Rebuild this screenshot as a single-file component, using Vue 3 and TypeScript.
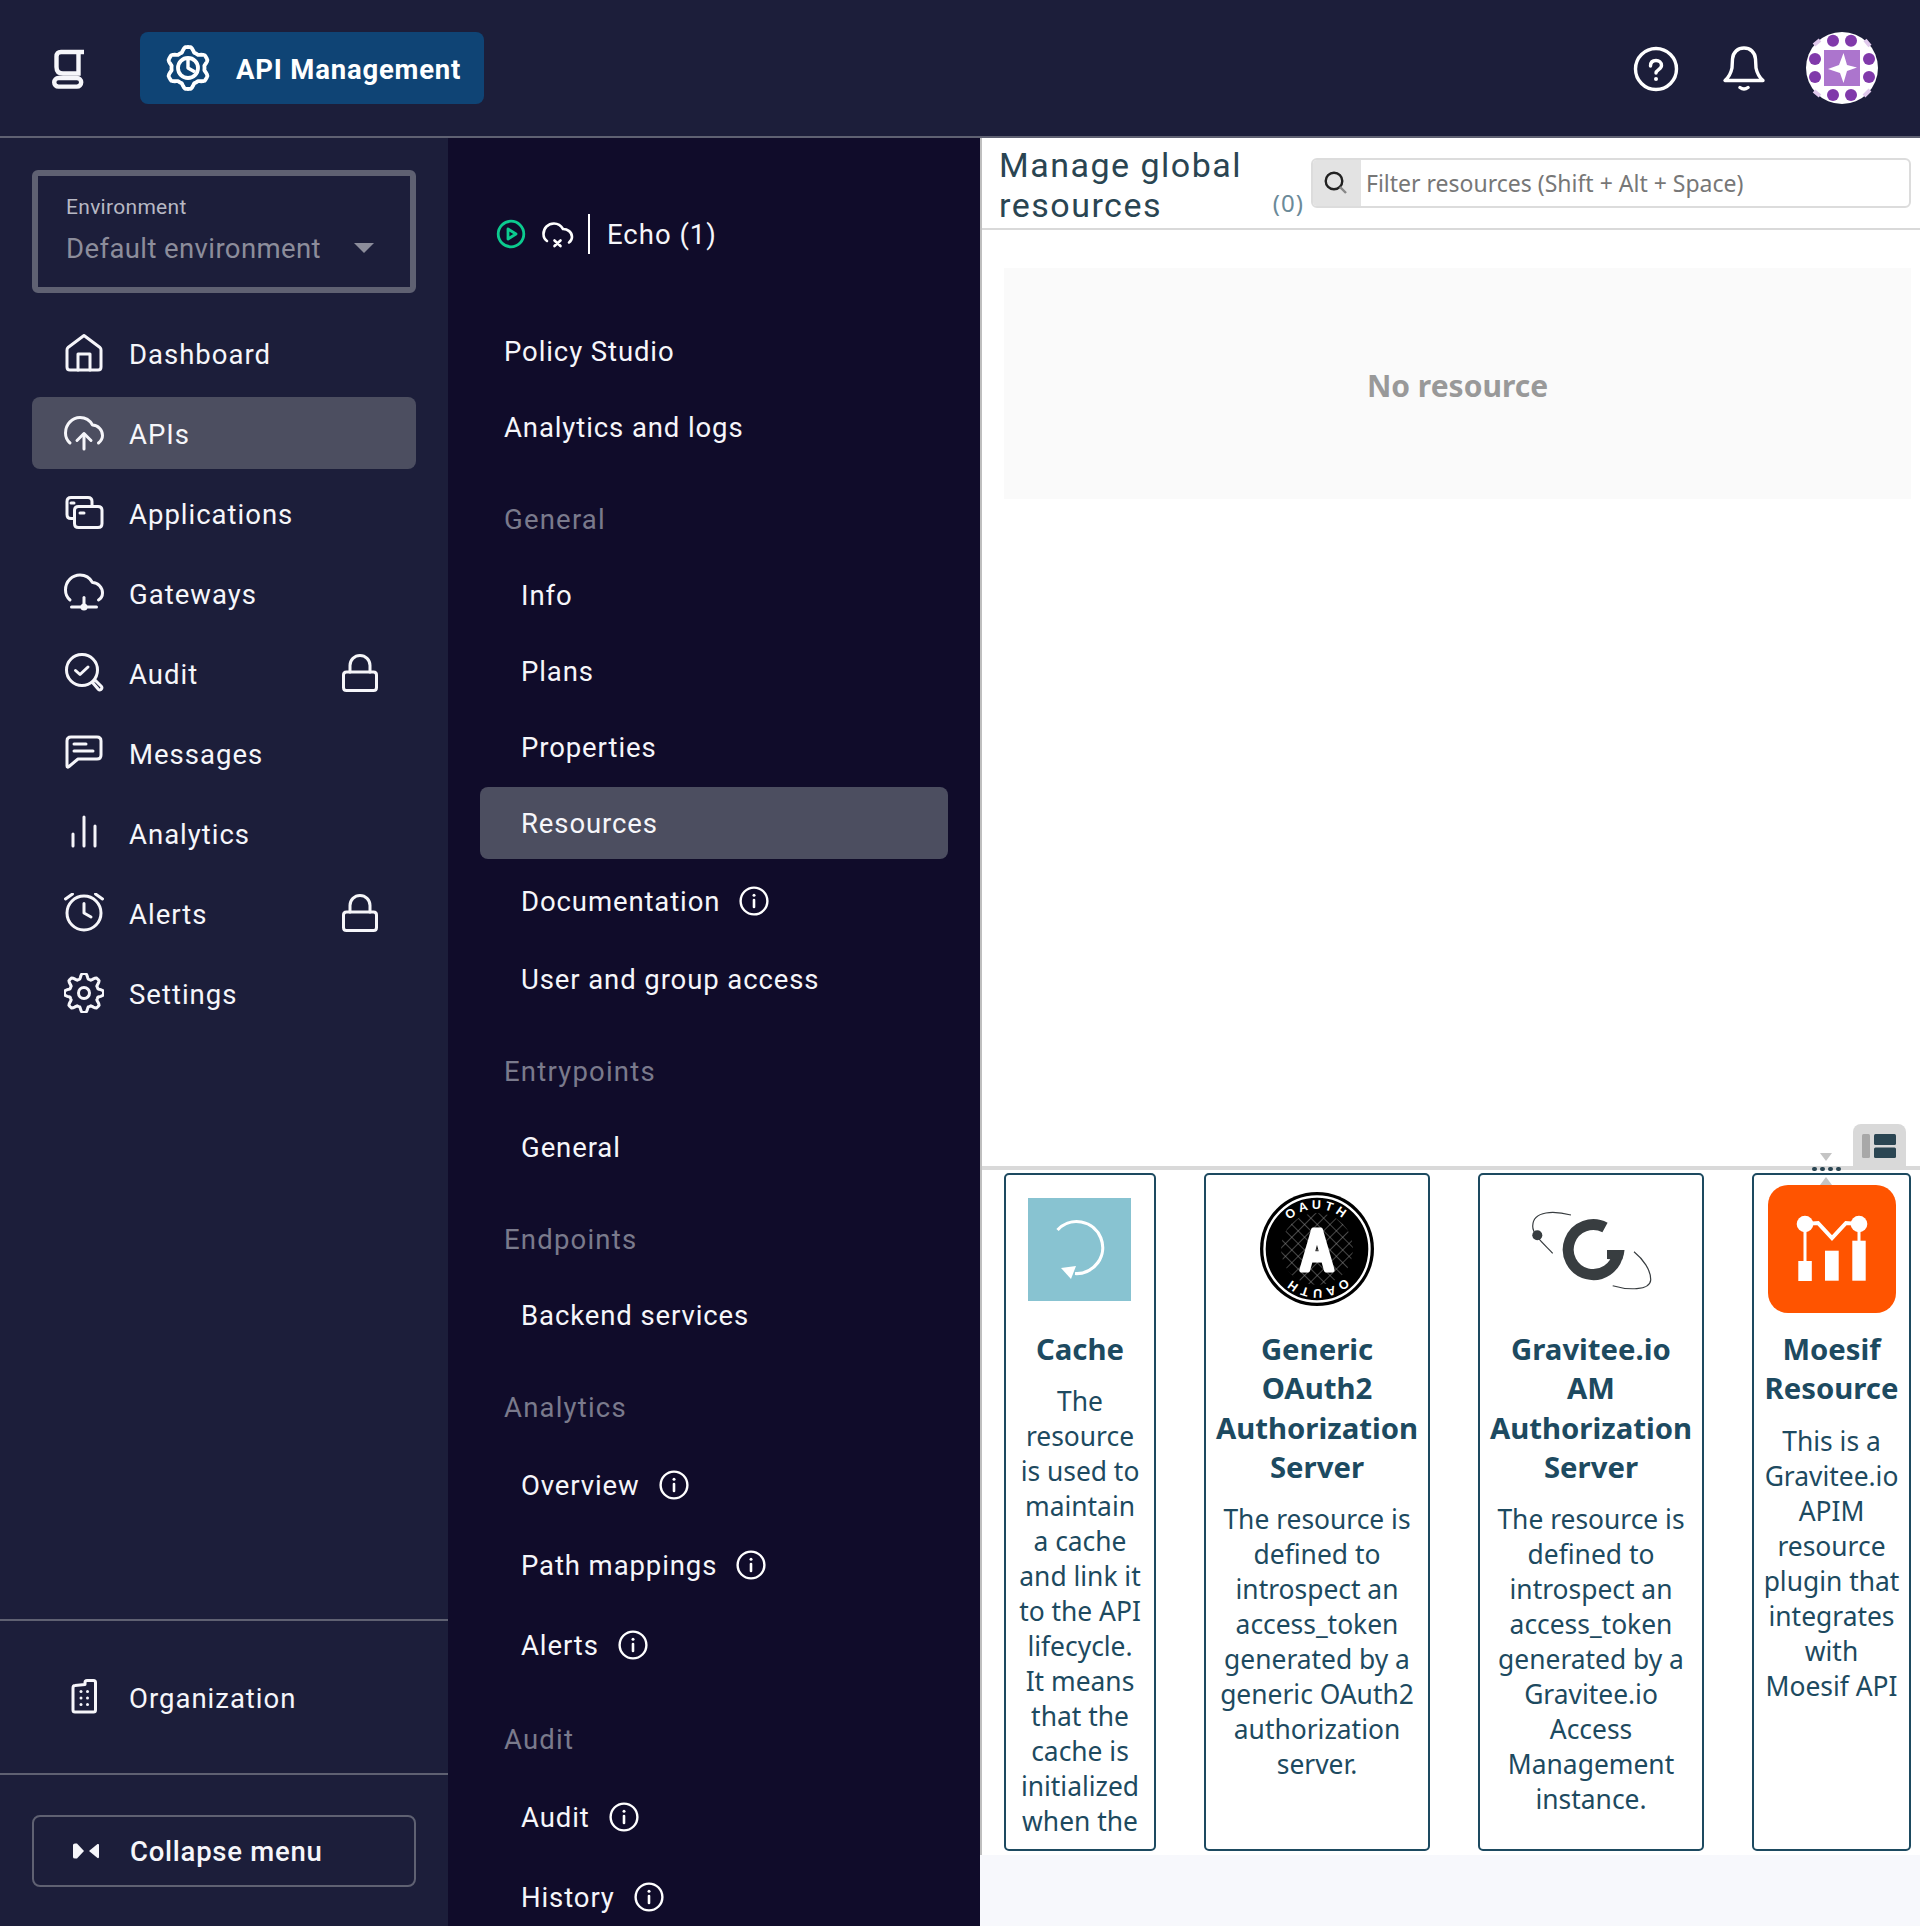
<script setup lang="ts">
function lobed(cx: number, cy: number, R: number, r: number, n: number, phase = 0): string {
  const pts: string[] = []
  const steps = n * 16
  for (let i = 0; i < steps; i++) {
    const t = (i / steps) * Math.PI * 2
    const c = Math.max(-1, Math.min(1, 1.5 * Math.cos(n * (t - phase))))
    const rad = (R + r) / 2 + ((R - r) / 2) * c
    const x = cx + rad * Math.sin(t)
    const y = cy - rad * Math.cos(t)
    pts.push(`${i === 0 ? 'M' : 'L'}${x.toFixed(2)} ${y.toFixed(2)}`)
  }
  return pts.join(' ') + ' Z'
}

const cloud = 'M6 30 C2.5 27 1.5 23 1.5 20 C1.5 11 8.5 4.5 16 4.5 C22 4.5 26 7.5 28.5 12 C34 12 38.5 17 38.5 22.5 C38.5 25.5 37 28 34.5 30'

const icons: Record<string, string[]> = {
  home: ['M20 2.5 L36 14.5 Q37 15.5 37 17 V34 Q37 37 34 37 H6 Q3 37 3 34 V17 Q3 15.5 4 14.5 Z', 'M14 37 V21 H26 V37'],
  upload: [cloud, 'M20 36 V21', 'M13 27.5 L20 20.5 L27 27.5'],
  apps: ['M9 25.5 H7 Q3 25.5 3 21.5 V8.5 Q3 4.5 7 4.5 H24 Q28 4.5 28 8.5 V13', 'M14.5 13.5 H34 Q38 13.5 38 17.5 V30.5 Q38 34.5 34 34.5 H14.5 Q10.5 34.5 10.5 30.5 V17.5 Q10.5 13.5 14.5 13.5 Z', 'M7 10 H10', 'M16 20 H20'],
  gateway: ['M6 27 C2.5 24 1.5 20 1.5 17 C1.5 8 8.5 2 16 2 C22 2 26 5 28.5 9.5 C34 9.5 38.5 14.5 38.5 20 C38.5 23 37 25.5 34.5 27', 'M7.5 34 H32.5', 'M20 24.5 V32', 'M18 34 a2 2 0 1 0 4 0 a2 2 0 1 0 -4 0'],
  audit: ['M33.5 17 A15.5 15.5 0 1 1 2.5 17 A15.5 15.5 0 1 1 33.5 17 Z', 'M11.5 17.5 L16 21.5 L24 14', 'M28.5 29.5 L31 27 L37.5 33.5 Q38.5 35 37 36.5 Q35.5 37.5 34.5 36.5 Z'],
  msg: ['M7 4 H33 Q37 4 37 8 V22 Q37 26 33 26 H14 L5 33.5 Q3 35 3 33 V8 Q3 4 7 4 Z', 'M10 11 H22', 'M10 18 H29'],
  chart: ['M9 21 V33', 'M20 4 V33', 'M31 13 V33'],
  clock: ['M37 20 A17 17 0 1 1 3 20 A17 17 0 1 1 37 20 Z', 'M20 10.5 V20 L27 24', 'M1.5 6 L8.5 1', 'M38.5 6 L31.5 1'],
  gear: [lobed(20, 20, 19.5, 14.5, 8), 'M25.5 20 A5.5 5.5 0 1 1 14.5 20 A5.5 5.5 0 1 1 25.5 20 Z'],
  lock: ['M6.5 18 H33.5 Q36.5 18 36.5 21 V33.5 Q36.5 36.5 33.5 36.5 H6.5 Q3.5 36.5 3.5 33.5 V21 Q3.5 18 6.5 18 Z', 'M10 18 V11.5 A10 10 0 0 1 30 11.5 V18'],
  org: ['M9 11 Q9 8.5 11 8.5 L21 7.5 V5.5 Q21 3.5 23 3.5 H29.5 Q31.5 3.5 31.5 5.5 V33 Q31.5 35 29.5 35 H11 Q9 35 9 33 Z', 'M17 14.5 h0.01', 'M23.5 14.5 h0.01', 'M17 21 h0.01', 'M23.5 21 h0.01', 'M17 27.5 h0.01', 'M23.5 27.5 h0.01'],
}

interface MainItem { label: string; icon: string; active?: boolean; locked?: boolean }
const mainNav: MainItem[] = [
  { label: 'Dashboard', icon: 'home' },
  { label: 'APIs', icon: 'upload', active: true },
  { label: 'Applications', icon: 'apps' },
  { label: 'Gateways', icon: 'gateway' },
  { label: 'Audit', icon: 'audit', locked: true },
  { label: 'Messages', icon: 'msg' },
  { label: 'Analytics', icon: 'chart' },
  { label: 'Alerts', icon: 'clock', locked: true },
  { label: 'Settings', icon: 'gear' },
]

interface SubItem { label: string; info?: boolean; active?: boolean }
interface SubGroup { title?: string; items: SubItem[] }
const subNav: SubGroup[] = [
  { items: [{ label: 'Policy Studio' }, { label: 'Analytics and logs' }] },
  { title: 'General', items: [
    { label: 'Info' }, { label: 'Plans' }, { label: 'Properties' },
    { label: 'Resources', active: true }, { label: 'Documentation', info: true }, { label: 'User and group access' },
  ] },
  { title: 'Entrypoints', items: [{ label: 'General' }] },
  { title: 'Endpoints', items: [{ label: 'Backend services' }] },
  { title: 'Analytics', items: [
    { label: 'Overview', info: true }, { label: 'Path mappings', info: true }, { label: 'Alerts', info: true },
  ] },
  { title: 'Audit', items: [{ label: 'Audit', info: true }, { label: 'History', info: true }] },
]

interface Card { kind: string; width: number; title: string[]; text: string[] }
const cards: Card[] = [
  { kind: 'cache', width: 152, title: ['Cache'], text: ['The', 'resource', 'is used to', 'maintain', 'a cache', 'and link it', 'to the API', 'lifecycle.', 'It means', 'that the', 'cache is', 'initialized', 'when the'] },
  { kind: 'oauth', width: 226, title: ['Generic', 'OAuth2', 'Authorization', 'Server'], text: ['The resource is', 'defined to', 'introspect an', 'access_token', 'generated by a', 'generic OAuth2', 'authorization', 'server.'] },
  { kind: 'gravitee', width: 226, title: ['Gravitee.io', 'AM', 'Authorization', 'Server'], text: ['The resource is', 'defined to', 'introspect an', 'access_token', 'generated by a', 'Gravitee.io', 'Access', 'Management', 'instance.'] },
  { kind: 'moesif', width: 159, title: ['Moesif', 'Resource'], text: ['This is a', 'Gravitee.io', 'APIM', 'resource', 'plugin that', 'integrates', 'with', 'Moesif API'] },
]

const avatarDots = [[27, 8.7], [45, 8.7], [9, 27], [63, 27], [9, 45], [63, 45], [27, 63], [45, 63]]
const apimGear = lobed(24, 24, 21, 16.5, 6)
</script>

<template>
  <div class="page">
    <header class="topbar">
      <svg class="logo" viewBox="0 0 32 40" width="32" height="40" fill="none" stroke="#f6f6fa" stroke-width="4.4">
        <path d="M32 3 H9 Q4.5 3 4.5 7.5 V18 Q4.5 24.5 11 24.5 H26.5 V3" />
        <rect x="2.2" y="29" width="27" height="8.6" rx="4.3" />
      </svg>
      <div class="product">
        <svg viewBox="0 0 48 48" width="48" height="48" fill="none" stroke="#fff" stroke-width="3.8" stroke-linejoin="round">
          <path :d="apimGear" />
          <circle cx="24" cy="24" r="10" />
          <path d="M24 16 V24 L31 28" stroke-width="3.4" />
        </svg>
        <span>API Management</span>
      </div>
      <div class="top-right">
        <svg viewBox="0 0 48 48" width="48" height="48" fill="none" stroke="#fff" stroke-width="3.4" stroke-linecap="round">
          <circle cx="24" cy="25" r="20.5" />
          <path d="M18.5 22 C18.5 18 21 16.5 24 16.5 C27 16.5 29.5 18.5 29.5 21.5 C29.5 25.5 24 25.5 24 29" />
          <path d="M24 35 h0.01" stroke-width="4" />
        </svg>
        <svg viewBox="0 0 48 48" width="48" height="48" fill="none" stroke="#fff" stroke-width="3.4" stroke-linecap="round" stroke-linejoin="round">
          <path d="M5 36.5 H43 C39 33 37 29 36 24 L35.5 15 C35 8 30 4 24 4 C18 4 13 8 12.5 15 L12 24 C11 29 9 33 5 36.5 Z" />
          <path d="M20 43.5 Q24 46.5 28 43.5" />
        </svg>
        <svg class="avatar" viewBox="0 0 72 72" width="72" height="72">
          <circle cx="36" cy="36" r="36" fill="#fff" />
          <path d="M8 13 L14 8 M59 8 L64 14 M8 59 L14 64 M58 64 L64 58" stroke="#e0c9ec" stroke-width="4" />
          <rect x="18" y="18" width="36" height="36" fill="#ac75cd" />
          <circle v-for="(d, i) in avatarDots" :key="i" :cx="d[0]" :cy="d[1]" r="6" fill="#8039aa" />
          <path d="M37.5 21 L41 33 L51 35.5 L41 39 L37.5 51 L34 41 L22 37 L33 33 Z" fill="#fff" />
        </svg>
      </div>
    </header>

    <div class="body">
      <aside class="side">
        <div class="env">
          <div class="env-label">Environment</div>
          <div class="env-value">Default environment<i class="caret"></i></div>
        </div>
        <nav class="side-nav">
          <div v-for="item in mainNav" :key="item.label" class="side-item" :class="{ active: item.active }">
            <svg class="ico" viewBox="0 0 40 40" width="40" height="40">
              <path v-for="(d, i) in icons[item.icon]" :key="i" :d="d" />
            </svg>
            <span>{{ item.label }}</span>
            <svg v-if="item.locked" class="ico lock" viewBox="0 0 40 40" width="40" height="40">
              <path v-for="(d, i) in icons.lock" :key="i" :d="d" />
            </svg>
          </div>
        </nav>
        <div class="side-foot">
          <div class="org">
            <div class="side-item">
              <svg class="ico" viewBox="0 0 40 40" width="40" height="40">
                <path v-for="(d, i) in icons.org" :key="i" :d="d" />
              </svg>
              <span>Organization</span>
            </div>
          </div>
          <div class="collapse-wrap">
            <div class="collapse">
              <svg viewBox="0 0 28 16" width="28" height="16" fill="#f6f6fa">
                <path d="M1 2 Q1 0.5 3 0.5 H5 L12 8 L5 15.5 H3 Q1 15.5 1 14 Z" />
                <path d="M27 2 V14 Q27 15.5 25.5 15 L17 8 L25.5 1 Q27 0.5 27 2 Z" />
              </svg>
              <span>Collapse menu</span>
            </div>
          </div>
        </div>
      </aside>

      <aside class="sub">
        <div class="sub-head">
          <svg viewBox="0 0 30 30" width="30" height="30" fill="none" stroke="#0ccb8f" stroke-width="2.8" stroke-linejoin="round">
            <circle cx="15" cy="15" r="12.8" />
            <path d="M12 10 L20 15 L12 20 Z" />
          </svg>
          <svg class="cloudx" viewBox="0 0 32 28" width="32" height="28" fill="none" stroke="#fff" stroke-width="2.6" stroke-linecap="round">
            <path d="M5 21 C2 19 1.5 16 1.5 14 C1.5 8 6 3.5 12 3.5 C16 3.5 19 5.5 21 9 C25.5 9 30 12 30 17 C30 19 29 21 27 22.5" />
            <path d="M12.5 20.5 L18.5 26 M18.5 20.5 L12.5 26" />
          </svg>
          <i class="vsep"></i>
          <span class="echo">Echo (1)</span>
        </div>
        <div class="sub-list">
          <div v-for="(g, gi) in subNav" :key="gi" class="group">
            <div v-if="g.title" class="group-title">{{ g.title }}</div>
            <div
              v-for="it in g.items"
              :key="it.label"
              class="sub-item"
              :class="{ active: it.active, nested: g.title, 'has-info': it.info }"
            >
              <span>{{ it.label }}</span>
              <svg v-if="it.info" viewBox="0 0 30 30" width="30" height="30" fill="none" stroke="#fff" stroke-width="2.4" stroke-linecap="round">
                <circle cx="15" cy="15" r="13.4" />
                <path d="M15 14 V21" stroke-width="2.6" />
                <path d="M15 9.2 h0.01" stroke-width="3" />
              </svg>
            </div>
          </div>
        </div>
      </aside>

      <main class="main">
        <div class="panel">
          <div class="head">
            <div class="title-wrap">
              <h1 class="title">Manage global<br />resources</h1>
              <span class="count">(0)</span>
            </div>
            <div class="filter">
              <div class="addon">
                <svg viewBox="0 0 24 24" width="24" height="24" fill="none" stroke="#222" stroke-width="2.4">
                  <circle cx="10" cy="10" r="8.3" />
                  <path d="M16 16 L22 22" stroke="#888" />
                </svg>
              </div>
              <div class="placeholder">Filter resources (Shift + Alt + Space)</div>
            </div>
          </div>
          <div class="table-area">
            <div class="empty">No resource</div>
          </div>
          <div class="splitter">
            <div class="toggle">
              <svg viewBox="0 0 36 26" width="36" height="26">
                <rect x="0" y="1" width="8" height="24" rx="1.5" fill="#a8a8a8" />
                <rect x="12" y="1" width="22" height="11" rx="1.5" fill="#2a4552" />
                <rect x="12" y="14.5" width="22" height="10.5" rx="1.5" fill="#2a4552" />
              </svg>
            </div>
            <div class="grip">
              <i class="tri down"></i>
              <div class="dots"><b></b><b></b><b></b><b></b></div>
              <i class="tri up"></i>
            </div>
          </div>
          <div class="cards">
            <article v-for="c in cards" :key="c.kind" class="card" :style="{ width: c.width + 'px' }">
              <div class="logo-box">
                <svg v-if="c.kind === 'cache'" class="cache-logo" viewBox="0 0 103 103" width="103" height="103">
                  <rect width="103" height="103" fill="#88c3d1" />
                  <path d="M29.5 32 A26 26 0 1 1 47 75.5" fill="none" stroke="#fff" stroke-width="3.2" />
                  <path d="M33 70 L48 68 L43 81 Z" fill="#fff" />
                </svg>
                <svg v-else-if="c.kind === 'oauth'" viewBox="0 0 114 114" width="114" height="114">
                  <defs>
                    <pattern id="mesh" width="9" height="9" patternUnits="userSpaceOnUse" patternTransform="rotate(45)">
                      <path d="M0 0 H9 M0 0 V9" stroke="#8d8d8d" stroke-width="1" fill="none" />
                    </pattern>
                    <path id="oarc" d="M17 57 A40 40 0 0 1 97 57" />
                  </defs>
                  <circle cx="57" cy="57" r="57" fill="#000" />
                  <circle cx="57" cy="57" r="52.5" fill="none" stroke="#fff" stroke-width="2.4" />
                  <circle cx="57" cy="57" r="36" fill="url(#mesh)" />
                  <g class="oauth-text">
                    <text><textPath href="#oarc" startOffset="50%" text-anchor="middle">OAUTH</textPath></text>
                    <text transform="rotate(180 57 57)"><textPath href="#oarc" startOffset="50%" text-anchor="middle">OAUTH</textPath></text>
                  </g>
                  <text class="oauth-a" transform="translate(57 78) scale(0.8 1)" text-anchor="middle">A</text>
                </svg>
                <svg v-else-if="c.kind === 'gravitee'" viewBox="0 0 128 128" width="128" height="128" fill="none">
                  <path d="M78 42.5 A25 25 0 1 0 91 68" stroke="#383d40" stroke-width="11" />
                  <path d="M80 65 H97.5 C97 70 96 72 95 75 L80 74 Z" fill="#383d40" />
                  <path d="M44 30 C28 26 6 25 5.7 41 C5.5 50 18 60 25.7 68.3" stroke="#383d40" stroke-width="1.2" />
                  <path d="M107 66.7 C116 74 124 85 123.7 95 C123 106 100 105 85.7 100.7" stroke="#383d40" stroke-width="1.2" />
                  <circle cx="10.3" cy="50.3" r="5" fill="#383d40" />
                </svg>
                <svg v-else viewBox="0 0 128 128" width="128" height="128">
                  <rect width="128" height="128" rx="20" fill="#ff5400" />
                  <g fill="#fff">
                    <rect x="30.3" y="76" width="13.5" height="20" />
                    <rect x="57" y="65.7" width="13.7" height="30" />
                    <rect x="84.3" y="55.7" width="13.4" height="40" />
                    <rect x="35.5" y="39" width="3" height="38" />
                    <rect x="89.5" y="39" width="3" height="17" />
                    <circle cx="37" cy="39" r="8.3" />
                    <circle cx="91" cy="39" r="8.3" />
                  </g>
                  <path d="M37 39 L50 38 L64 53 L78 38 L91 39" fill="none" stroke="#fff" stroke-width="4" />
                </svg>
              </div>
              <h2 class="card-title">
                <div v-for="t in c.title" :key="t">{{ t }}</div>
              </h2>
              <p class="card-text">
                <span v-for="(t, i) in c.text" :key="i">{{ t }}</span>
              </p>
            </article>
          </div>
        </div>
        <div class="strip"></div>
      </main>
    </div>
  </div>
</template>

<style>
html, body { margin: 0; padding: 0; }
</style>

<style scoped>
.page {
  width: 1920px;
  height: 1926px;
  display: flex;
  flex-direction: column;
  overflow: hidden;
  font-family: Roboto, "Liberation Sans", sans-serif;
  color: #f6f6fa;
  background: #1c1e3a;
}
.topbar {
  height: 136px;
  flex: none;
  display: flex;
  align-items: center;
  padding: 0 42px 0 52px;
  border-bottom: 2px solid #5f6172;
  background: #1c1e3a;
}
.logo { margin-top: 2px; }
.product {
  margin-left: 56px;
  width: 344px;
  height: 72px;
  box-sizing: border-box;
  padding-left: 24px;
  display: flex;
  align-items: center;
  gap: 24px;
  background: #0f4475;
  border-radius: 8px;
  font-size: 27.5px;
  font-weight: 700;
  letter-spacing: 0.8px;
  color: #fff;
}
.product span { margin-top: 2px; }
.top-right {
  margin-left: auto;
  display: flex;
  align-items: center;
  gap: 40px;
}
.avatar { margin-left: -2px; }
.body { flex: 1; display: flex; min-height: 0; }

.side {
  width: 448px;
  flex: none;
  display: flex;
  flex-direction: column;
  padding-top: 32px;
  box-sizing: border-box;
}
.env {
  margin: 0 32px;
  height: 123px;
  box-sizing: border-box;
  border: 6px solid #5f6172;
  border-radius: 6px;
  padding: 17px 28px 0;
}
.env-label { font-size: 21px; line-height: 28px; color: #b7b8c4; letter-spacing: 0.3px; }
.env-value {
  position: relative;
  margin-top: 8px;
  font-size: 27.5px;
  line-height: 40px;
  letter-spacing: 0.4px;
  color: #8c8d9b;
}
.caret {
  position: absolute;
  right: 8px;
  top: 14px;
  border-left: 10px solid transparent;
  border-right: 10px solid transparent;
  border-top: 10px solid #8c8d9b;
}
.side-nav {
  margin: 24px 32px 0;
  display: flex;
  flex-direction: column;
  gap: 8px;
}
.side-item {
  height: 72px;
  display: flex;
  align-items: center;
  padding-left: 32px;
  border-radius: 8px;
  font-size: 27.5px;
  letter-spacing: 1px;
}
.side-item span { margin: 2px 0 0 25px; }
.side-item.active { background: #4c4e60; }
.ico {
  flex: none;
  fill: none;
  stroke: #f6f6fa;
  stroke-width: 3;
  stroke-linecap: round;
  stroke-linejoin: round;
}
.lock { margin-left: auto; margin-right: 36px; margin-top: 1px; }
.side-foot { margin-top: auto; }
.org {
  border-top: 2px solid #5f6172;
  border-bottom: 2px solid #5f6172;
  padding: 40px 32px;
}
.collapse-wrap { padding: 40px 32px 39px; }
.collapse {
  height: 72px;
  box-sizing: border-box;
  border: 2px solid #5f6172;
  border-radius: 8px;
  padding-left: 38px;
  display: flex;
  align-items: center;
  gap: 30px;
  font-size: 27.5px;
  font-weight: 500;
  letter-spacing: 0.75px;
}

.sub {
  width: 532px;
  flex: none;
  box-sizing: border-box;
  padding: 76px 32px 0;
  background: #100c2a;
}
.sub-head {
  height: 40px;
  display: flex;
  align-items: center;
  padding-left: 16px;
}
.cloudx { margin-left: 16px; }
.vsep {
  width: 2px;
  height: 40px;
  background: #fff;
  margin: 0 17px 0 14px;
}
.echo { font-size: 27.5px; letter-spacing: 1px; }
.sub-list { margin-top: 61px; }
.group { display: flex; flex-direction: column; gap: 4px; }
.group-title {
  height: 92px;
  box-sizing: border-box;
  display: flex;
  align-items: flex-end;
  padding: 0 0 0 24px;
  line-height: 70px;
  font-size: 27.5px;
  letter-spacing: 1.2px;
  color: #7a7a8c;
}
.sub-item {
  height: 72px;
  display: flex;
  align-items: center;
  gap: 19px;
  padding-left: 24px;
  border-radius: 8px;
  font-size: 27.5px;
  letter-spacing: 0.9px;
}
.sub-item.nested { padding-left: 41px; }
.sub-item.has-info { height: 76px; }
.sub-item.active { background: #4c4e60; }

.main {
  flex: 1;
  min-width: 0;
  display: flex;
  flex-direction: column;
  background: #f7f8fc;
}
.panel {
  flex: 1;
  min-height: 0;
  display: flex;
  flex-direction: column;
  background: #fff;
  border-left: 2px solid #bfbfbf;
}
.strip { height: 71px; flex: none; }
.head {
  height: 92px;
  flex: none;
  box-sizing: border-box;
  border-bottom: 2px solid #d9d9d9;
  display: flex;
  padding: 0 9px 0 17px;
  color: #2a4552;
}
.title-wrap {
  width: 312px;
  flex: none;
  display: flex;
  justify-content: space-between;
  align-items: flex-end;
  padding-right: 7px;
  box-sizing: border-box;
  padding-bottom: 3px;
}
.title {
  margin: 0;
  font-family: Roboto, sans-serif;
  font-weight: 400;
  font-size: 34px;
  line-height: 40px;
  letter-spacing: 1.5px;
}
.count {
  font-family: "Noto Sans", sans-serif;
  font-size: 24px;
  line-height: 32px;
  margin-bottom: 6px;
  color: #6b8a99;
  letter-spacing: 1px;
}
.filter {
  flex: 1;
  margin-top: 20px;
  height: 50px;
  box-sizing: border-box;
  border: 2px solid #dcdcdc;
  border-radius: 6px;
  display: flex;
  align-items: center;
  overflow: hidden;
}
.addon {
  width: 48px;
  height: 100%;
  background: #e3e3e3;
  display: flex;
  align-items: center;
  justify-content: center;
  padding-right: 3px;
  box-sizing: border-box;
}
.placeholder {
  padding-left: 5px;
  font-family: "Noto Sans", sans-serif;
  font-size: 23px;
  color: #777;
}
.table-area {
  height: 936px;
  flex: none;
  box-sizing: border-box;
  padding: 38px 9px 0 22px;
}
.empty {
  height: 231px;
  padding-top: 3px;
  box-sizing: border-box;
  background: #fafafa;
  display: flex;
  align-items: center;
  justify-content: center;
  font-family: "Noto Sans", sans-serif;
  font-size: 30px;
  font-weight: 700;
  color: #999;
}
.splitter {
  position: relative;
  height: 4px;
  flex: none;
  background: #d9d9d9;
}
.toggle {
  position: absolute;
  right: 14px;
  bottom: 4px;
  width: 53px;
  height: 42px;
  padding-top: 2px;
  box-sizing: border-box;
  background: #d9d9d9;
  border-radius: 8px 8px 0 0;
  display: flex;
  align-items: center;
  justify-content: center;
}
.grip {
  position: absolute;
  left: 829px;
  top: -13px;
  width: 30px;
  z-index: 2;
  display: flex;
  flex-direction: column;
  align-items: center;
}
.dots { display: flex; gap: 3px; margin: 6px 0; }
.dots b { width: 5px; height: 4px; border-radius: 2px; background: #2a4552; }
.tri { width: 0; height: 0; border-left: 6px solid transparent; border-right: 6px solid transparent; }
.tri.down { border-top: 8px solid #c4c4c4; }
.tri.up { border-bottom: 8px solid #c4c4c4; }
.cards {
  flex: 1;
  min-height: 0;
  display: flex;
  justify-content: space-between;
  padding: 3px 9px 4px 22px;
}
.card {
  box-sizing: border-box;
  height: 678px;
  border: 2px solid #1d4a60;
  border-radius: 5px;
  overflow: hidden;
  padding: 10px 0 0;
  color: #1d4a60;
  text-align: center;
  font-family: "Noto Sans", sans-serif;
}
.logo-box {
  height: 128px;
  display: flex;
  align-items: center;
  justify-content: center;
}
.cache-logo { margin-left: -1px; }
.card-title {
  margin: 17px 0 0;
  font-size: 29.3px;
  font-weight: 700;
  line-height: 39.3px;
}
.card-text {
  margin: 15px 0 0;
  font-size: 26.4px;
  line-height: 35px;
}
.card-text span { display: block; }
.oauth-text text {
  font-family: "Liberation Sans", sans-serif;
  font-weight: 700;
  font-size: 12.5px;
  letter-spacing: 3.4px;
  fill: #fff;
}
.oauth-a {
  font-family: "Liberation Sans", sans-serif;
  font-weight: 700;
  font-size: 58px;
  fill: #fff;
  stroke: #fff;
  stroke-width: 5;
  stroke-linejoin: round;
}
</style>
